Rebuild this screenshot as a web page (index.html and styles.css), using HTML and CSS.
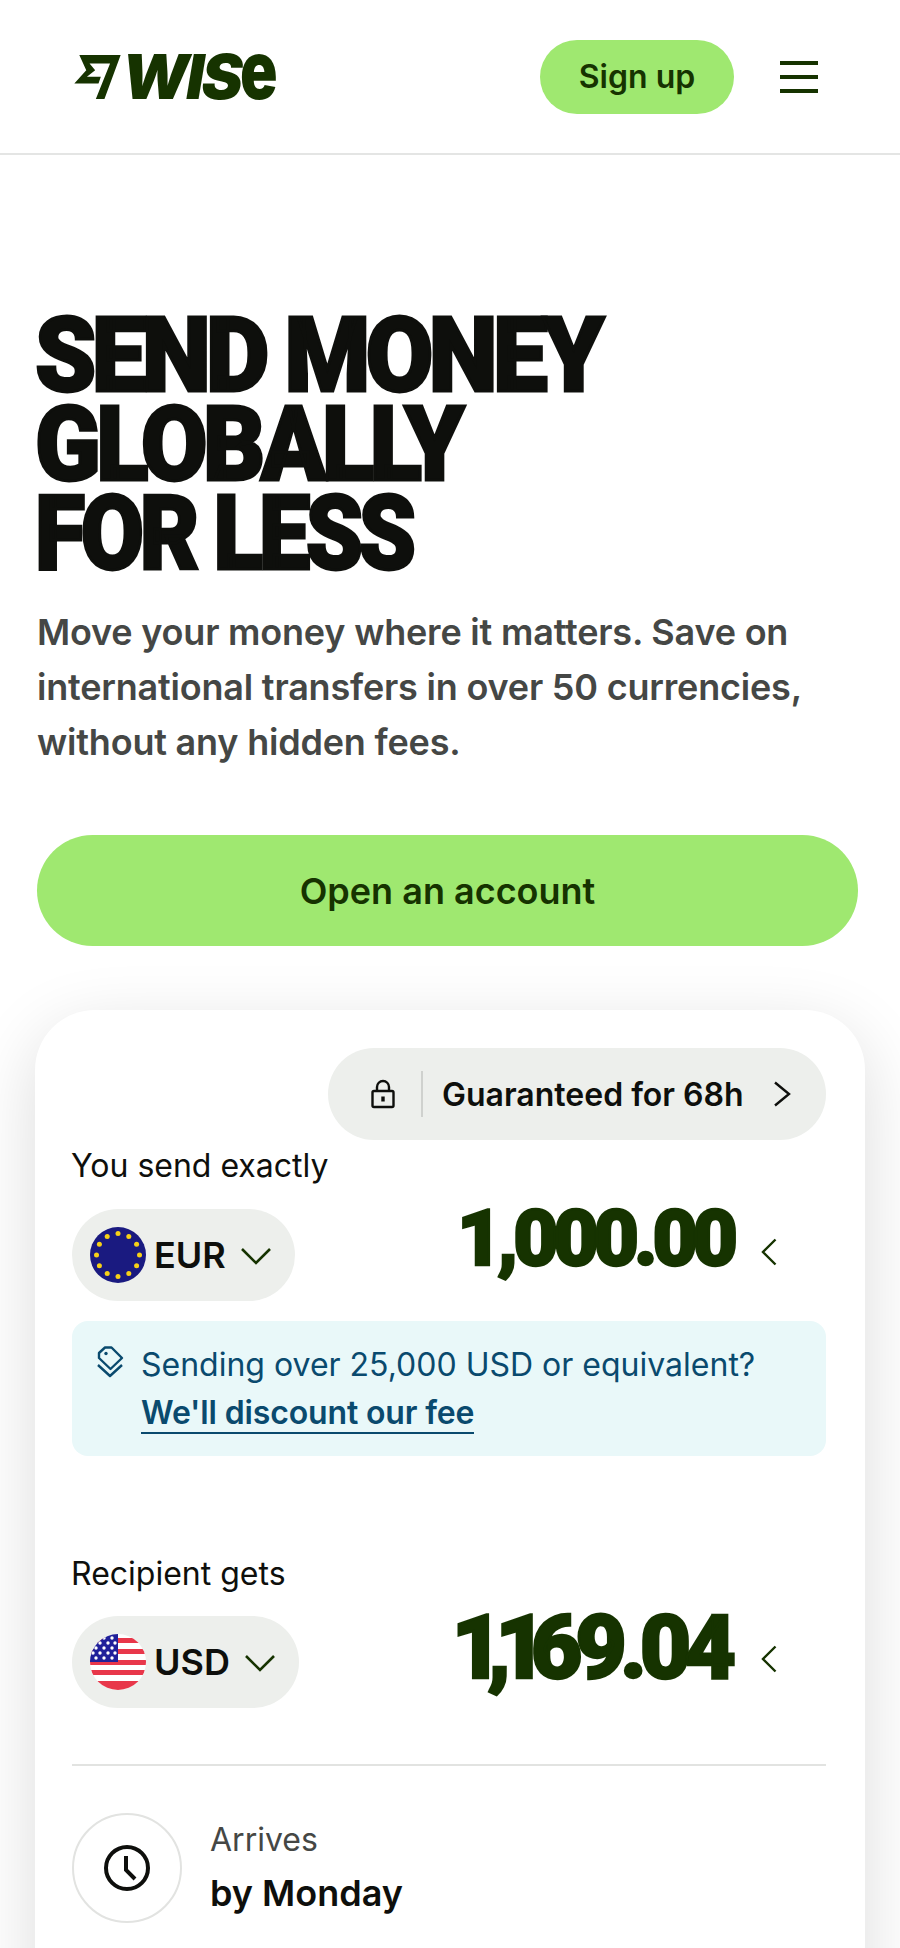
FILE: index.html
```html
<!DOCTYPE html>
<html lang="en">
<head>
<meta charset="utf-8">
<title>Wise</title>
<link rel="stylesheet" href="styles.css">
</head>
<body>
<header class="topbar">
  <a class="logo" href="#">
    <svg class="logo-mark" viewBox="42 42 140 133" width="47" height="44"><path d="M57 42H182L133 175H107L150 68H88L105 88 80 108H122L115 128H42L78 88z" fill="#163300"/></svg>
    <span class="logo-word">WIS<span class="logo-e">e</span></span>
  </a>
  <div class="topbar-actions">
    <a class="signup" href="#">Sign up</a>
    <div class="burger"><span></span><span></span><span></span></div>
  </div>
</header>
<main>
  <section class="hero">
    <h1><span class="h-line">Send money</span><span class="h-line h-line-2">globally</span><span class="h-line h-line-3">for less</span></h1>
    <p>Move your money where it matters. Save on international transfers in over 50 currencies, without any hidden fees.</p>
    <a class="cta" href="#">Open an account</a>
  </section>
  <section class="card">
    <div class="guarantee-row">
      <div class="guarantee">
        <svg class="lock" viewBox="0 0 24 30" width="24" height="30" fill="none" stroke="#0e0f0c" stroke-width="2.4"><path d="M6 12V8a6 6 0 0 1 12 0v4"/><rect x="1.5" y="12" width="21" height="16" rx="1.5"/><path d="M12 17.5v5" stroke-width="3.4"/></svg>
        <span class="vline"></span>
        <span class="guarantee-text">Guaranteed for 68h</span>
        <svg class="chev-r" viewBox="0 0 18 26" width="18" height="26" fill="none" stroke="#0e0f0c" stroke-width="2.4"><path d="M2 1.5 16 13 2 24.500"/></svg>
      </div>
    </div>
    <div class="label">You send exactly</div>
    <div class="money-row">
      <div class="currency">
        <svg class="flag" viewBox="0 0 56 56" width="56" height="56"><circle cx="28" cy="28" r="28" fill="#1a1a80"/><g fill="#f7d117"><circle cx="28" cy="6.500" r="2.500"/><circle cx="38.800" cy="9.400" r="2.500"/><circle cx="46.600" cy="17.200" r="2.500"/><circle cx="49.500" cy="28" r="2.500"/><circle cx="46.600" cy="38.800" r="2.500"/><circle cx="38.800" cy="46.600" r="2.500"/><circle cx="28" cy="49.500" r="2.500"/><circle cx="17.200" cy="46.600" r="2.500"/><circle cx="9.400" cy="38.800" r="2.500"/><circle cx="6.500" cy="28" r="2.500"/><circle cx="9.400" cy="17.200" r="2.500"/><circle cx="17.200" cy="9.400" r="2.500"/></g></svg>
        <span class="code">EUR</span>
        <svg class="chev-d" viewBox="0 0 32 20" width="32" height="20" fill="none" stroke="#163300" stroke-width="2.6"><path d="M2 3 16 17 30 3"/></svg>
      </div>
      <div class="amount"><span class="amount-num amount-send">1,000.00</span>
        <svg class="chev-l" viewBox="0 0 16 28" width="16" height="28" fill="none" stroke="#163300" stroke-width="2.4"><path d="M14.500 1.500 2 14 14.500 26.500"/></svg>
      </div>
    </div>
    <div class="notice">
      <svg class="tag" viewBox="0 0 28 32" width="28" height="32" fill="none" stroke="#0a4a6e" stroke-width="2.4" stroke-linejoin="round"><path d="M9 1.500h6.500L26 12 14.500 23 3 12V7z"/><path d="M2 19l12 11 12-11"/><circle cx="10" cy="7.500" r="1.700" fill="#0a4a6e" stroke="none"/></svg>
      <div class="notice-text">Sending over 25,000 USD or equivalent?<br><a href="#">We'll discount our fee</a></div>
    </div>
    <div class="label label-second">Recipient gets</div>
    <div class="money-row money-row-second">
      <div class="currency">
        <svg class="flag" viewBox="0 0 56 56" width="56" height="56"><defs><clipPath id="usclip"><circle cx="28" cy="28" r="28"/></clipPath></defs><g clip-path="url(#usclip)"><rect width="56" height="56" fill="#fff"/><g fill="#e8374a"><rect y="4" width="56" height="5"/><rect y="15" width="56" height="5"/><rect y="26" width="56" height="5"/><rect y="36" width="56" height="5"/><rect y="47" width="56" height="9"/></g><rect width="28" height="28" fill="#20209a"/><g fill="#fff"><circle cx="14" cy="4" r="1.700"/><circle cx="22" cy="4" r="1.700"/><circle cx="10" cy="9" r="1.700"/><circle cx="18" cy="9" r="1.700"/><circle cx="25" cy="9" r="1.700"/><circle cx="6" cy="14" r="1.700"/><circle cx="14" cy="14" r="1.700"/><circle cx="22" cy="14" r="1.700"/><circle cx="3" cy="19" r="1.700"/><circle cx="10" cy="19" r="1.700"/><circle cx="18" cy="19" r="1.700"/><circle cx="25" cy="19" r="1.700"/><circle cx="6" cy="24" r="1.700"/><circle cx="14" cy="24" r="1.700"/><circle cx="22" cy="24" r="1.700"/></g></g></svg>
        <span class="code">USD</span>
        <svg class="chev-d" viewBox="0 0 32 20" width="32" height="20" fill="none" stroke="#163300" stroke-width="2.6"><path d="M2 3 16 17 30 3"/></svg>
      </div>
      <div class="amount"><span class="amount-num amount-get"><span class="tight-ones">1,1</span>69.04</span>
        <svg class="chev-l chev-l-get" viewBox="0 0 16 28" width="16" height="28" fill="none" stroke="#163300" stroke-width="2.4"><path d="M14.500 1.500 2 14 14.500 26.500"/></svg>
      </div>
    </div>
    <hr class="rule">
    <div class="arrival">
      <div class="clock-ring">
        <svg viewBox="0 0 46 46" width="46" height="46" fill="none" stroke="#0e0f0c" stroke-width="4"><circle cx="23" cy="23" r="21"/><path d="M22 11v14l9 9"/></svg>
      </div>
      <div class="arrival-text">
        <div class="arrival-label">Arrives</div>
        <div class="arrival-value">by Monday</div>
      </div>
    </div>
  </section>
</main>
</body>
</html>
```
FILE: styles.css
```css
* { box-sizing: border-box; }
html, body { margin: 0; padding: 0; }
body {
  width: 900px;
  height: 1948px;
  overflow: hidden;
  background: #fff;
  font-family: Inter, "Noto Sans", sans-serif;
  color: #0e0f0c;
}
a { text-decoration: none; color: inherit; }

.topbar {
  height: 155px;
  border-bottom: 2px solid #e4e5e4;
  padding: 0 82px 0 74px;
  display: flex;
  align-items: center;
  justify-content: space-between;
}
.logo { display: flex; align-items: center; gap: 1px; }
.logo-mark { display: block; }
.logo-word {
  font-family: Inter, sans-serif;
  font-weight: 900;
  font-style: italic;
  font-size: 62px;
  line-height: 1;
  letter-spacing: -2.800px;
  color: #163300;
}
.logo-e {
  display: inline-block;
  font-style: normal;
  transform: scaleY(1.3);
  transform-origin: 50% 84%;
}
.topbar-actions { display: flex; align-items: center; gap: 46px; }
.signup {
  width: 194px;
  height: 74px;
  border-radius: 37px;
  background: #9fe870;
  color: #163300;
  font-size: 32px;
  font-weight: 600;
  display: flex;
  align-items: center;
  justify-content: center;
}
.burger { width: 38px; display: flex; flex-direction: column; gap: 10px; }
.burger span { display: block; height: 4px; background: #163300; }

.hero { padding: 156px 42px 0 37px; }
h1 {
  margin: 0 0 0 -2px;
  font-family: Roboto, sans-serif;
  font-weight: 900;
  font-size: 103px;
  line-height: 89px;
  letter-spacing: -4.800px;
  text-transform: uppercase;
  color: #0e0f0c;
  -webkit-text-stroke: 3px #0e0f0c;
  transform: scaleX(0.95);
  transform-origin: 0 50%;
}
.h-line { display: block; transform-origin: 0 50%; }
.h-line-2 { transform: scaleX(0.985); }
.h-line-3 { transform: scaleX(0.935); }
.hero p {
  margin: 27px 0 0;
  font-size: 36px;
  line-height: 55px;
  font-weight: 600;
  letter-spacing: -0.200px;
  color: #454745;
}
.cta {
  margin-top: 65px;
  height: 111px;
  border-radius: 56px;
  background: #9fe870;
  color: #163300;
  font-size: 36px;
  font-weight: 600;
  display: flex;
  align-items: center;
  justify-content: center;
}

.card {
  margin: 64px 35px 0;
  height: 1100px;
  border-radius: 60px;
  background: #fff;
  padding: 38px 39px 0 37px;
  box-shadow: 0 20px 70px rgba(14, 15, 12, 0.14);
}
.guarantee-row { display: flex; justify-content: flex-end; }
.guarantee {
  width: 498px;
  height: 92px;
  border-radius: 46px;
  background: #edefec;
  padding-left: 43px;
  display: flex;
  align-items: center;
}
.vline { width: 2px; height: 46px; background: #cfd1ce; margin-left: 26px; }
.guarantee-text { font-size: 32px; font-weight: 600; margin-left: 19px; }
.chev-r { margin-left: 29px; }

.label { font-size: 32px; line-height: 40px; margin: 6px 0 0 -1px; color: #0e0f0c; }
.label-second { margin-top: 98px; }
.money-row { display: flex; align-items: center; justify-content: space-between; margin-top: 23px; height: 92px; }
.money-row-second { margin-top: 22px; }
.currency {
  height: 92px;
  border-radius: 46px;
  background: #edefec;
  padding: 0 23px 0 18px;
  display: flex;
  align-items: center;
}
.flag { display: block; }
.code { font-size: 36px; font-weight: 600; margin-left: 8px; }
.chev-d { margin-left: 14px; margin-top: 2px; }
.amount { display: flex; align-items: center; height: 92px; padding-right: 49px; }
.amount-num {
  font-family: Roboto, sans-serif;
  font-weight: 900;
  color: #163300;
  -webkit-text-stroke: 2.500px #163300;
}
.amount-send {
  font-size: 78px;
  line-height: 56px;
  letter-spacing: -5px;
  margin-bottom: 32px;
}
.amount-get {
  font-size: 89px;
  line-height: 60px;
  letter-spacing: -7px;
  margin-bottom: 28px;
}
.tight-ones { letter-spacing: -16px; }
.chev-l { margin-left: 28px; margin-bottom: 6px; }
.chev-l-get { margin-left: 32px; }

.notice {
  margin-top: 20px;
  height: 135px;
  border-radius: 16px;
  background: #e9f8f9;
  padding: 20px 0 0 24px;
  display: flex;
  gap: 17px;
  color: #0a4a6e;
}
.tag { margin-top: 5px; flex: none; }
.notice-text { font-size: 32px; line-height: 48px; }
.notice-text a { font-weight: 600; letter-spacing: -0.150px; border-bottom: 2px solid #0a4a6e; }

.rule { border: 0; height: 2px; background: #e2e3e1; margin: 56px 0 0; }
.arrival { display: flex; align-items: center; margin-top: 47px; gap: 28px; }
.clock-ring {
  width: 110px;
  height: 110px;
  border-radius: 50%;
  border: 2px solid #e2e3e1;
  display: flex;
  align-items: center;
  justify-content: center;
}
.arrival-label { font-size: 32px; line-height: 50px; color: #454745; }
.arrival-value { font-size: 36px; line-height: 56px; font-weight: 600; }
```
